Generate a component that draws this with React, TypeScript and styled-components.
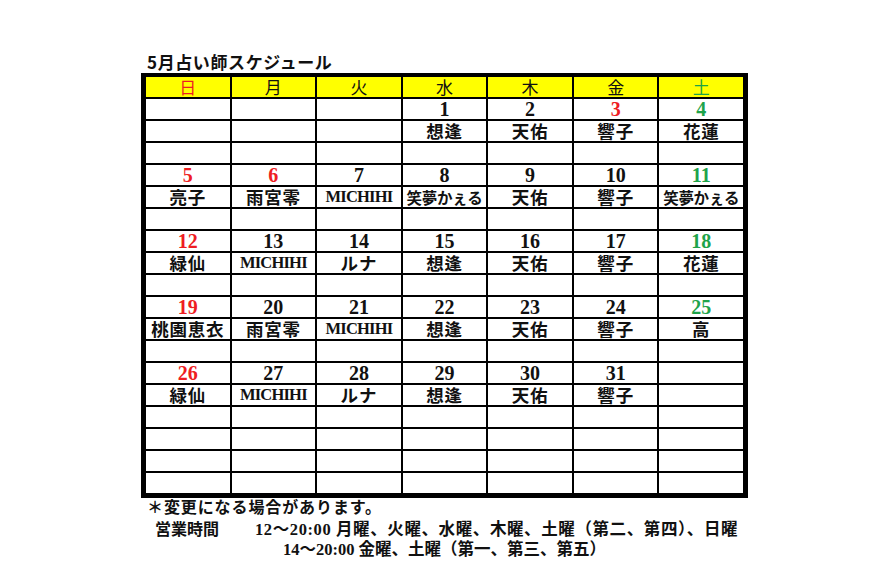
import React from "react";
import styled, { createGlobalStyle } from "styled-components";

const Global = createGlobalStyle`
  html, body { margin: 0; padding: 0; background: #fff; }
  body { width: 890px; height: 570px; overflow: hidden; }
`;

const RED = "#ee1d23";
const GREEN = "#1ea34a";

type Tone = "red" | "green" | "black";
const toneColor = (t?: Tone) => (t === "red" ? RED : t === "green" ? GREEN : "#111");

const Page = styled.div`
  padding: 52px 0 0 141px;
  font-family: "Liberation Serif", "Noto Sans CJK JP", serif;
  color: #111;
`;

const Title = styled.div`
  font-family: "Noto Sans CJK JP", sans-serif;
  font-weight: 700;
  font-size: 17px;
  line-height: 20px;
  height: 21px;
  margin-left: 6px;
  letter-spacing: 0.6px;
`;

const Grid = styled.div`
  display: grid;
  grid-template-columns: repeat(7, 1fr);
  grid-auto-rows: 20px;
  gap: 2px;
  width: 607px;
  box-sizing: border-box;
  background: #000;
  border: 5px solid #000;
  border-top-width: 4px;
`;

const HeadCell = styled.div<{ $tone?: Tone }>`
  background: #ffff00;
  color: ${(p) => toneColor(p.$tone)};
  font-family: "Noto Sans CJK JP", serif;
  font-weight: 400;
  font-size: 17px;
  line-height: 20px;
  text-align: center;
`;

const DateCell = styled.div<{ $tone?: Tone }>`
  background: #fff;
  color: ${(p) => toneColor(p.$tone)};
  font-family: "Liberation Serif", serif;
  font-weight: 700;
  font-size: 20px;
  line-height: 20px;
  text-align: center;
`;

const NameCell = styled.div<{ $latin?: boolean; $small?: boolean }>`
  background: #fff;
  color: #111;
  font-family: ${(p) => (p.$latin ? `"Liberation Serif", serif` : `"Noto Sans CJK JP", serif`)};
  font-weight: 700;
  font-size: ${(p) => (p.$latin ? "16.5px" : p.$small ? "15.5px" : "17.5px")};
  line-height: 20px;
  text-align: center;
  white-space: nowrap;
  letter-spacing: ${(p) => (p.$latin ? "-0.8px" : p.$small ? "-0.3px" : "0.8px")};
`;

const BlankCell = styled.div`
  background: #fff;
`;

const Notes = styled.div`
  font-family: "Liberation Serif", "Noto Sans CJK JP", serif;
  font-weight: 700;
  font-size: 16px;
  color: #111;
`;

const NoteLine = styled.div<{ $indent: number; $spacing?: number; $lh: number }>`
  display: flex;
  align-items: center;
  padding-left: ${(p) => p.$indent}px;
  white-space: nowrap;
  line-height: ${(p) => p.$lh}px;
  height: ${(p) => p.$lh}px;
  letter-spacing: ${(p) => p.$spacing ?? 0}px;
`;

const Label = styled.span`
  width: 100px;
  flex: none;
  letter-spacing: 0;
`;

const Hours = styled.span`
  font-size: 16.5px;
`;

const days: { t: string; tone?: Tone }[] = [
  { t: "日", tone: "red" },
  { t: "月" },
  { t: "火" },
  { t: "水" },
  { t: "木" },
  { t: "金" },
  { t: "土", tone: "green" },
];

type Week = { dates: (string | null)[]; tones: (Tone | undefined)[]; names: string[]; blanks: number };

const weeks: Week[] = [
  {
    dates: [null, null, null, "1", "2", "3", "4"],
    tones: [undefined, undefined, undefined, undefined, undefined, "red", "green"],
    names: ["", "", "", "想逢", "天佑", "響子", "花蓮"],
    blanks: 1,
  },
  {
    dates: ["5", "6", "7", "8", "9", "10", "11"],
    tones: ["red", "red", undefined, undefined, undefined, undefined, "green"],
    names: ["亮子", "雨宮零", "MICHIHI", "笑夢かぇる", "天佑", "響子", "笑夢かぇる"],
    blanks: 1,
  },
  {
    dates: ["12", "13", "14", "15", "16", "17", "18"],
    tones: ["red", undefined, undefined, undefined, undefined, undefined, "green"],
    names: ["緑仙", "MICHIHI", "ルナ", "想逢", "天佑", "響子", "花蓮"],
    blanks: 1,
  },
  {
    dates: ["19", "20", "21", "22", "23", "24", "25"],
    tones: ["red", undefined, undefined, undefined, undefined, undefined, "green"],
    names: ["桃園恵衣", "雨宮零", "MICHIHI", "想逢", "天佑", "響子", "高"],
    blanks: 1,
  },
  {
    dates: ["26", "27", "28", "29", "30", "31", null],
    tones: ["red", undefined, undefined, undefined, undefined, undefined, undefined],
    names: ["緑仙", "MICHIHI", "ルナ", "想逢", "天佑", "響子", ""],
    blanks: 4,
  },
];

export default function App() {
  const cells: React.ReactNode[] = [];
  weeks.forEach((w, wi) => {
    w.dates.forEach((d, i) =>
      cells.push(
        d ? (
          <DateCell key={`d${wi}-${i}`} $tone={w.tones[i]}>
            {d}
          </DateCell>
        ) : (
          <BlankCell key={`d${wi}-${i}`} />
        )
      )
    );
    w.names.forEach((n, i) =>
      cells.push(
        n ? (
          <NameCell key={`n${wi}-${i}`} $latin={/^[A-Z]+$/.test(n)} $small={n.length >= 5}>
            {n}
          </NameCell>
        ) : (
          <BlankCell key={`n${wi}-${i}`} />
        )
      )
    );
    for (let b = 0; b < w.blanks; b++) {
      for (let i = 0; i < 7; i++) cells.push(<BlankCell key={`b${wi}-${b}-${i}`} />);
    }
  });

  return (
    <>
      <Global />
      <Page>
        <Title>5月占い師スケジュール</Title>
        <Grid>
          {days.map((d) => (
            <HeadCell key={d.t} $tone={d.tone}>
              {d.t}
            </HeadCell>
          ))}
          {cells}
        </Grid>
        <Notes>
          <NoteLine $indent={6} $spacing={0.9} $lh={20}>＊変更になる場合があります。</NoteLine>
          <NoteLine $indent={14} $spacing={0.6} $lh={23}>
            <Label>営業時間</Label>
            <Hours>12～20:00 月曜、火曜、水曜、木曜、土曜（第二、第四）、日曜</Hours>
          </NoteLine>
          <NoteLine $indent={142} $lh={18}>
            <Hours>14～20:00 金曜、土曜（第一、第三、第五）</Hours>
          </NoteLine>
        </Notes>
      </Page>
    </>
  );
}
